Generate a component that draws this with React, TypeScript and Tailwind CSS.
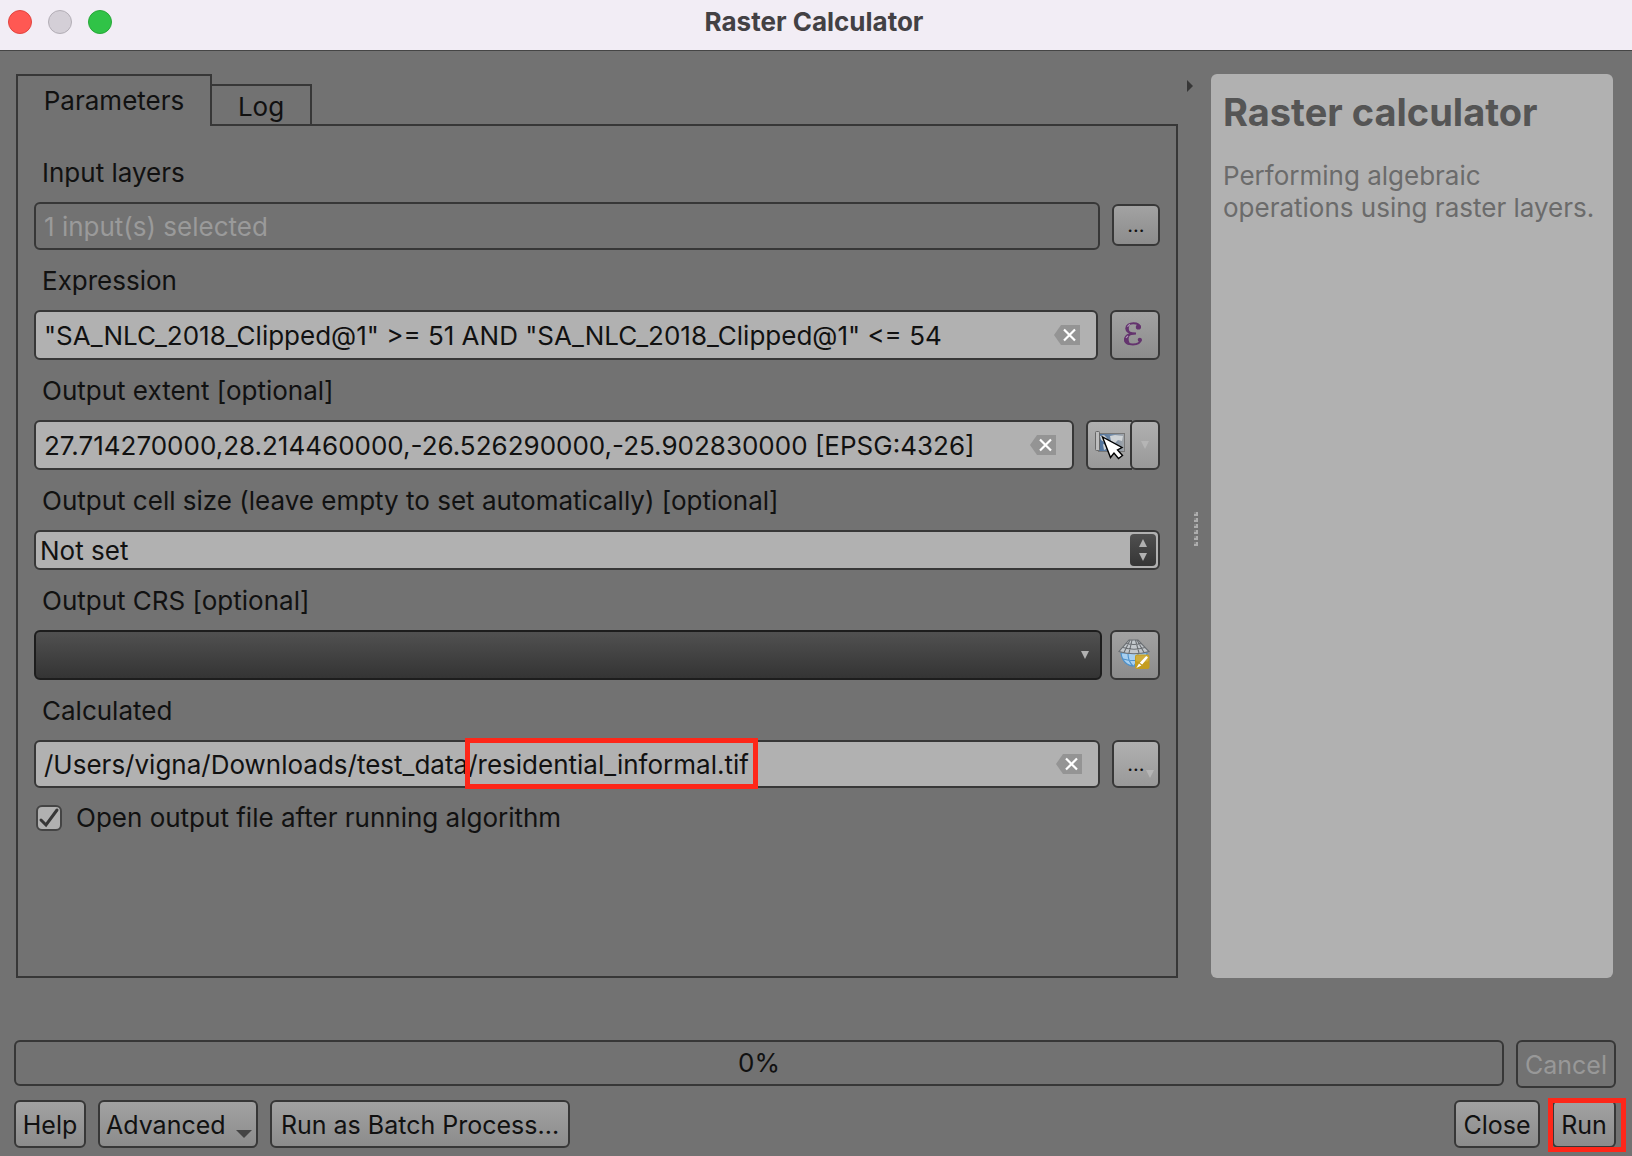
import React, { useState } from "react";
import clsx from "clsx";

interface ToolButtonProps extends React.ButtonHTMLAttributes<HTMLButtonElement> {
  light?: boolean;
}

const ToolButton: React.FC<ToolButtonProps> = ({
  light,
  className,
  children,
  ...rest
}) => (
  <button
    type="button"
    className={clsx(
      "flex shrink-0 items-center justify-center rounded-md border-2 border-[#373737] bg-linear-to-b",
      light ? "from-[#b0b0b0] to-[#999]" : "from-[#a2a2a2] to-[#8c8c8c]",
      className,
    )}
    {...rest}
  >
    {children}
  </button>
);

const ClearIcon = () => (
  <svg width="26" height="20" viewBox="0 0 26 20">
    <path d="M0 10L7 0H26V20H7Z" fill="#949494" />
    <path d="M10 4.5L21 15.5M21 4.5L10 15.5" stroke="#fff" strokeWidth="2.2" />
  </svg>
);

const DownArrow = ({ fill }: { fill: string }) => (
  <svg width="8" height="8" viewBox="0 0 8 8">
    <path d="M0 0H8L4 8Z" fill={fill} />
  </svg>
);

const EpsilonIcon = () => (
  <svg width="20" height="24" viewBox="0 0 20 24" fill="none">
    <path
      d="M17 5.5C16.5 2.5 13.5 1.3 10.5 1.3C6.5 1.3 3.3 3.2 3.3 6.4C3.3 9.5 6.5 11.4 13 11.4C6 11.6 2 13.8 2 17.2C2 20.8 5.5 22.4 10 22.4C14 22.4 17.3 20.8 18 17.6"
      stroke="#64346e"
      strokeWidth="2"
    />
    <path
      d="M5.6 2.5C2.8 3.8 2 7.6 4 9.5C5.2 10.8 7 11.2 8.5 11.3C6.8 9.8 5.8 8.4 5.8 6.4C5.8 4.4 6.8 3 8.3 2ZM5 12.8C0.8 14.2 0 18.6 2.4 21C4 22.7 6.5 23.3 9.5 23C6.9 22 5.6 19.8 5.6 17C5.6 15 6.6 13.4 8.4 12.2Z"
      fill="#64346e"
    />
    <circle cx="15.4" cy="5" r="2.6" fill="#64346e" />
    <circle cx="16.8" cy="17.8" r="2.1" fill="#64346e" />
    <path d="M4.4 4.6L7 2.3M3 15.8L5 13.8" stroke="#b195b8" strokeWidth="1.2" />
  </svg>
);

const ExtentIcon = () => (
  <svg width="30" height="30" viewBox="0 0 30 30">
    <defs>
      <linearGradient id="sea" x1="0" x2="1">
        <stop offset="0" stopColor="#4a6f9c" />
        <stop offset="0.5" stopColor="#7189a5" />
        <stop offset="1" stopColor="#a3a6a9" />
      </linearGradient>
    </defs>
    <rect x="3.5" y="3.5" width="26" height="18" fill="url(#sea)" stroke="#777" />
    <path
      d="M5 6L9 5L12 8L9 12L6 10ZM15 6L20 5L28 6L27 11L23 10L20 13L16 11ZM8 14L12 15L11 19L9 20Z"
      fill="#cfd3d6"
    />
    <rect x="0.5" y="1.5" width="4" height="19" rx="1" fill="#bdbdbd" stroke="#676767" />
    <path
      d="M7.5 7L15.5 27.5L19 23L23.5 28.5L27.5 25.5L22.5 20L27 17.5Z"
      fill="#fff"
      stroke="#000"
      strokeWidth="1.4"
    />
  </svg>
);

const CrsIcon = () => (
  <svg width="32" height="30" viewBox="0 0 32 30">
    <path d="M3 14C4 22 9 27 16 27C23 27 28 22 29 14Z" fill="#a8d0f0" stroke="#4d91cb" strokeWidth="1.2" />
    <path
      d="M10 15C10 20 12 24 15 27M20 15C20 20 18 24 16 27M5 20C12 22 20 22 27 20"
      fill="none"
      stroke="#4d91cb"
      strokeWidth="1.1"
    />
    <path d="M11 1H20L31 12.5Q16 17 1 12.5Z" fill="#c3c8cc" stroke="#6a6e72" strokeWidth="1.1" />
    <path
      d="M14 1L11 14M17.5 1L21 14M12 1L6 13.5M19 1L26 13.5M8 4.5Q16 6.5 23.5 4.5M5 8.5Q16 12 27 8.5"
      fill="none"
      stroke="#6a6e72"
      strokeWidth="1.1"
    />
    <rect x="17" y="15.5" width="14.5" height="14.5" rx="2" fill="#c49d20" />
    <rect x="18" y="16.5" width="12.5" height="6" rx="1" fill="#d0ad3c" />
    <path d="M28.2 17L30 18.6L24.2 25.6L21.8 23.8ZM21 24.6L23.4 26.6L18.3 28.9Z" fill="#fff" />
  </svg>
);

interface FieldProps {
  id: string;
  label: string;
  children: React.ReactNode;
}

const Field: React.FC<FieldProps> = ({ id, label, children }) => (
  <div>
    <label htmlFor={id} className="flex h-[60px] items-center px-2 pt-0.5">
      {label}
    </label>
    <div className="flex items-center">{children}</div>
  </div>
);

interface ClearableInputProps {
  id: string;
  value: string;
  onChange: (value: string) => void;
  className?: string;
  children?: React.ReactNode;
}

const ClearableInput: React.FC<ClearableInputProps> = ({
  id,
  value,
  onChange,
  className,
  children,
}) => (
  <div
    className={clsx(
      "relative flex min-w-0 flex-1 items-center rounded-md border-2 border-[#373737] bg-[#b1b1b1] pr-4",
      className,
    )}
  >
    <input
      id={id}
      type="text"
      value={value}
      onChange={(e) => onChange(e.target.value)}
      className="h-full min-w-0 flex-1 bg-transparent pl-2 outline-none"
    />
    <button type="button" aria-label="Clear" onClick={() => onChange("")}>
      <ClearIcon />
    </button>
    {children}
  </div>
);

const TitleBar = () => (
  <header className="flex h-[51px] items-center border-b border-[#454545] bg-[#f2edf5] px-2 pb-1.5">
    <div className="flex gap-4">
      <button
        type="button"
        aria-label="Close window"
        className="size-6 rounded-full border border-[#e2443f] bg-[#ff5853]"
      />
      <button
        type="button"
        aria-label="Minimize window"
        className="size-6 rounded-full border border-[#b3aeb6] bg-[#d4cfd7]"
      />
      <button
        type="button"
        aria-label="Zoom window"
        className="size-6 rounded-full border border-[#27a838] bg-[#30c347]"
      />
    </div>
    <h1 className="flex-1 pr-[108px] text-center text-[26px] font-bold text-[#434144]">
      Raster Calculator
    </h1>
  </header>
);

const App: React.FC = () => {
  const [expression, setExpression] = useState(
    '"SA_NLC_2018_Clipped@1" >= 51 AND "SA_NLC_2018_Clipped@1" <= 54',
  );
  const [extent, setExtent] = useState(
    "27.714270000,28.214460000,-26.526290000,-25.902830000 [EPSG:4326]",
  );
  const [cellSize, setCellSize] = useState("Not set");
  const [output, setOutput] = useState(
    "/Users/vigna/Downloads/test_data/residential_informal.tif",
  );
  const [openOutput, setOpenOutput] = useState(true);

  return (
    <div className="flex min-h-screen flex-col bg-[#727272] font-['Inter','Liberation_Sans',sans-serif] text-[26px] leading-8 text-[#111]">
      <TitleBar />

      <main className="flex flex-1 pt-[23px] pr-[19px] pl-4">
        <section className="flex min-w-0 flex-1 flex-col">
          <div role="tablist" className="relative z-10 -mb-0.5 flex items-end">
            <button
              type="button"
              role="tab"
              aria-selected="true"
              className="h-[52px] w-[196px] border-2 border-b-0 border-[#373737] bg-[#727272]"
            >
              Parameters
            </button>
            <button
              type="button"
              role="tab"
              aria-selected="false"
              className="-ml-0.5 h-[42px] w-[102px] border-2 border-[#373737] bg-[#727272] pt-1"
            >
              Log
            </button>
          </div>

          <div role="tabpanel" className="flex-1 border-2 border-[#373737] p-4">
            <Field id="layers" label="Input layers">
              <input
                id="layers"
                type="text"
                disabled
                value="1 input(s) selected"
                className="mr-3 h-12 min-w-0 flex-1 rounded-md border-2 border-[#373737] px-2 text-[#9a9a9a]"
              />
              <ToolButton
                aria-label="Select layers"
                className="mb-0.5 h-[42px] w-12 text-[20px]"
              >
                ...
              </ToolButton>
            </Field>

            <Field id="expression" label="Expression">
              <ClearableInput
                id="expression"
                value={expression}
                onChange={setExpression}
                className="mr-3 h-[50px]"
              />
              <ToolButton
                aria-label="Expression builder"
                className="size-[50px] pr-1 pb-0.5"
              >
                <EpsilonIcon />
              </ToolButton>
            </Field>

            <Field id="extent" label="Output extent [optional]">
              <ClearableInput
                id="extent"
                value={extent}
                onChange={setExtent}
                className="mr-3 h-[50px]"
              />
              <ToolButton
                light
                aria-label="Set to current map extent"
                className="h-[50px] w-[46px] rounded-r-none border-r-0"
              >
                <ExtentIcon />
              </ToolButton>
              <ToolButton
                light
                aria-label="Extent options"
                className="-ml-0.5 h-[50px] w-[30px]"
              >
                <DownArrow fill="#b5b5b5" />
              </ToolButton>
            </Field>

            <Field
              id="cell-size"
              label="Output cell size (leave empty to set automatically) [optional]"
            >
              <div className="flex h-10 min-w-0 flex-1 items-center rounded-md border-2 border-[#373737] bg-[#b1b1b1] pr-0.5">
                <input
                  id="cell-size"
                  type="text"
                  value={cellSize}
                  onChange={(e) => setCellSize(e.target.value)}
                  className="h-full min-w-0 flex-1 bg-transparent pl-1 outline-none"
                />
                <div className="flex h-8 w-[26px] flex-col overflow-hidden rounded bg-linear-to-b from-[#505050] to-[#353535]">
                  <button
                    type="button"
                    aria-label="Increase"
                    className="flex flex-1 items-center justify-center pt-0.5"
                  >
                    <svg width="8" height="8" viewBox="0 0 8 8">
                      <path d="M4 0L8 8H0Z" fill="#b1b1b1" />
                    </svg>
                  </button>
                  <button
                    type="button"
                    aria-label="Decrease"
                    className="flex flex-1 items-center justify-center pb-0.5"
                  >
                    <DownArrow fill="#b1b1b1" />
                  </button>
                </div>
              </div>
            </Field>

            <Field id="crs" label="Output CRS [optional]">
              <div className="relative mr-2 min-w-0 flex-1">
                <select
                  id="crs"
                  className="block h-[50px] w-full appearance-none rounded-md border-2 border-[#1d1d1d] bg-linear-to-b from-[#515151] to-[#343434] px-2 text-[#b1b1b1]"
                >
                  <option value="" />
                </select>
                <span className="pointer-events-none absolute top-[21px] right-[13px]">
                  <DownArrow fill="#b1b1b1" />
                </span>
              </div>
              <ToolButton aria-label="Select CRS" className="size-[50px] pr-0.5 pb-0.5">
                <CrsIcon />
              </ToolButton>
            </Field>

            <Field id="calculated" label="Calculated">
              <ClearableInput
                id="calculated"
                value={output}
                onChange={setOutput}
                className="mr-3 h-12"
              >
                <span className="pointer-events-none absolute -top-1 left-[429px] h-[51px] w-[293px] border-5 border-[#fe2719]" />
              </ClearableInput>
              <ToolButton
                light
                aria-label="Output options"
                className="relative h-12 w-12 text-[20px]"
              >
                ...
                <span className="absolute right-1 bottom-2">
                  <DownArrow fill="#b5b5b5" />
                </span>
              </ToolButton>
            </Field>

            <div className="mt-3.5 flex items-center pl-0.5">
              <span className="relative mr-3.5 flex size-[26px]">
                <input
                  id="open-output"
                  type="checkbox"
                  checked={openOutput}
                  onChange={(e) => setOpenOutput(e.target.checked)}
                  className="size-[26px] appearance-none rounded-md border-2 border-[#444] bg-[#b1b1b1]"
                />
                {openOutput && (
                  <svg
                    width="26"
                    height="26"
                    viewBox="0 0 26 26"
                    className="pointer-events-none absolute inset-0"
                  >
                    <path
                      d="M5 15L10 20L21 5"
                      fill="none"
                      stroke="#373737"
                      strokeWidth="3"
                      strokeLinecap="round"
                    />
                  </svg>
                )}
              </span>
              <label htmlFor="open-output">
                Open output file after running algorithm
              </label>
            </div>
          </div>
        </section>

        <div className="flex w-[33px] flex-col pt-1.5">
          <button
            type="button"
            aria-label="Collapse help panel"
            className="ml-[9px] self-start"
          >
            <svg width="6" height="12" viewBox="0 0 6 12">
              <path d="M0 0L6 6L0 12Z" fill="#373737" />
            </svg>
          </button>
          <div className="flex flex-1 flex-col justify-center gap-0.5 pb-3 pl-4">
            {[0, 1, 2, 3, 4, 5].map((dot) => (
              <svg key={dot} width="4" height="4" viewBox="0 0 4 4">
                <path d="M2 0H4V4H0V2H2Z" fill="#adadad" />
                <path d="M0 0H2V2H0Z" fill="#858585" />
              </svg>
            ))}
          </div>
        </div>

        <aside className="w-[402px] shrink-0 rounded-md bg-[#b1b1b1] px-3 pt-4">
          <h2 className="text-[38px] leading-[44px] font-bold whitespace-nowrap text-[#555]">
            Raster calculator
          </h2>
          <p className="mt-[26px] text-[#6b6b6b]">
            Performing algebraic operations using raster layers.
          </p>
        </aside>
      </main>

      <footer className="mt-[62px] pr-4 pb-2 pl-3.5">
        <div className="flex items-start gap-3">
          <div
            role="progressbar"
            aria-label="Progress"
            aria-valuenow={0}
            className="flex h-[46px] flex-1 items-center justify-center rounded-md border-2 border-[#373737]"
          >
            0%
          </div>
          <button
            type="button"
            disabled
            className="h-12 w-[100px] rounded-md border-2 border-[#373737] pt-0.5 text-[25px] text-[#989898]"
          >
            Cancel
          </button>
        </div>
        <div className="mt-3 flex items-center gap-3 text-[25px]">
          <ToolButton className="h-12 w-[72px] pt-0.5">Help</ToolButton>
          <ToolButton className="relative h-12 w-40 justify-start pt-0.5 pl-1.5">
            Advanced
            <svg
              width="16"
              height="8"
              viewBox="0 0 16 8"
              className="absolute right-1 bottom-2"
            >
              <path d="M0 0H16L8 8Z" fill="#444" />
            </svg>
          </ToolButton>
          <ToolButton className="h-12 w-[300px] pt-0.5">
            Run as Batch Process...
          </ToolButton>
          <ToolButton className="ml-auto h-12 w-[86px] pt-0.5">Close</ToolButton>
          <div className="relative">
            <ToolButton className="h-12 w-16 pt-0.5">Run</ToolButton>
            <span className="pointer-events-none absolute -top-0.5 -right-2.5 -bottom-1 -left-1 border-5 border-[#fe2719]" />
          </div>
        </div>
      </footer>
    </div>
  );
};

export default App;
